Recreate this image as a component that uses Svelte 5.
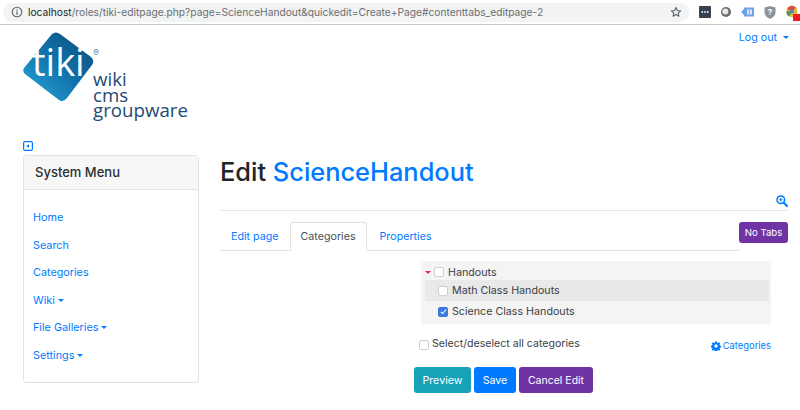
<script>
  const menu = [
    { label: "Home" },
    { label: "Search" },
    { label: "Categories" },
    { label: "Wiki", caret: true },
    { label: "File Galleries", caret: true },
    { label: "Settings", caret: true },
  ];
  const tabs = ["Edit page", "Categories", "Properties"];
  let activeTab = $state("Categories");
</script>

<div class="page">
  <div class="chrome">
    <div class="omnibox">
      <svg class="info" width="12" height="12" viewBox="0 0 12 12">
        <circle cx="6" cy="6" r="4.8" fill="none" stroke="#5f6368" stroke-width="1.1" />
        <rect x="5.4" y="5.2" width="1.2" height="3.6" fill="#5f6368" />
        <rect x="5.4" y="3.2" width="1.2" height="1.2" fill="#5f6368" />
      </svg>
      <span class="url"><b>localhost</b>/roles/tiki-editpage.php?page=ScienceHandout&amp;quickedit=Create+Page#contenttabs_editpage-2</span>
      <svg class="star" width="12" height="12" viewBox="0 0 24 24">
        <path d="M12 3l2.7 6 6.5.7-4.9 4.3 1.4 6.4L12 17l-5.7 3.4 1.4-6.4-4.9-4.3 6.5-.7z" fill="none" stroke="#5f6368" stroke-width="2.2" stroke-linejoin="round" />
      </svg>
    </div>
    <div class="extensions">
      <svg width="12" height="12" viewBox="0 0 12 12">
        <rect width="12" height="12" rx="1" fill="#36424f" />
        <rect x="2.5" y="5.2" width="1.6" height="1.6" fill="#fff" />
        <rect x="5.2" y="5.2" width="1.6" height="1.6" fill="#fff" />
        <rect x="7.9" y="5.2" width="1.6" height="1.6" fill="#fff" />
      </svg>
      <svg width="12" height="12" viewBox="0 0 12 12">
        <circle cx="6" cy="6" r="5" fill="#6b6b6b" />
        <circle cx="5.4" cy="5.4" r="3" fill="#e6e6e6" />
      </svg>
      <svg width="14" height="12" viewBox="0 0 14 12">
        <path d="M0 6l3-3V1.500h10v9H3V9z" fill="#6f9fe8" />
        <rect x="6" y="3.500" width="5" height="5" fill="#dce8fa" />
        <rect x="8.200" y="3.500" width=".8" height="5" fill="#6f9fe8" />
      </svg>
      <svg width="12" height="13" viewBox="0 0 12 13">
        <path d="M6 0l5.500 1.500v5c0 3-2.500 5-5.500 6.500C3 11.500.5 9.500.5 6.500v-5z" fill="#8d949c" />
        <text x="6" y="9" class="shield">?</text>
      </svg>
      <svg class="last" width="14" height="16" viewBox="0 0 14 16">
        <circle cx="6" cy="6.500" r="5.500" fill="#e8b93a" />
        <path d="M6 6.500L1 4a5.500 5.500 0 0 1 9-1.500z" fill="#d9503f" />
        <path d="M6 6.500L3 11.500A5.500 5.500 0 0 1 .6 6z" fill="#4c9a52" />
        <circle cx="6" cy="6.500" r="2" fill="#4a7fd0" />
        <rect x="7" y="9" width="7" height="7" fill="#ee1c25" />
      </svg>
    </div>
  </div>

  <header class="top">
    <svg class="logo" width="170" height="95" viewBox="0 0 170 95">
      <defs>
        <linearGradient id="tikiBlue" x1="0" y1="1" x2="1" y2="0">
          <stop offset="0" stop-color="#28a9e0" />
          <stop offset="0.55" stop-color="#0f6ea6" />
          <stop offset="1" stop-color="#114a78" />
        </linearGradient>
      </defs>
      <path d="M30 4 Q34 1 38 4 L69 27 Q73 31 70 35 L45 68 Q41 73 37 70 L3 44 Q0 41 2 38 Z" fill="url(#tikiBlue)" />
      <text x="10" y="46" class="tiki">tiki</text>
      <text x="71" y="26" class="reg">®</text>
      <text x="71" y="56" class="word">wiki</text>
      <text x="71" y="71.500" class="word">cms</text>
      <text x="71" y="87" class="word">groupware</text>
    </svg>
    <a class="logout" href="#top">Log out<span class="caret wide"></span></a>
  </header>

  <div class="toggle-row">
    <svg width="10" height="10" viewBox="0 0 10 10">
      <rect x=".6" y=".6" width="8.800" height="8.800" rx="1.300" fill="none" stroke="#007bff" stroke-width="1.200" />
      <path d="M6 3v4L3.400 5z" fill="#007bff" />
    </svg>
  </div>

  <div class="layout">
    <aside class="sidebar">
      <div class="card-head">System Menu</div>
      <nav class="card-body">
        {#each menu as item}
          <a href="#top">{item.label}{#if item.caret}<span class="caret"></span>{/if}</a>
        {/each}
      </nav>
    </aside>

    <main class="content">
      <h1>Edit <a href="#top">ScienceHandout</a></h1>
      <div class="tools">
        <svg width="12" height="12" viewBox="0 0 12 12">
          <circle cx="4.800" cy="4.800" r="3.800" fill="none" stroke="#007bff" stroke-width="1.500" />
          <path d="M7.800 7.800L11 11" stroke="#007bff" stroke-width="2" stroke-linecap="round" />
          <path d="M3 4.800h3.600M4.800 3v3.600" stroke="#007bff" stroke-width="1" />
        </svg>
      </div>

      <div class="tabbar">
        <div class="tabs">
          {#each tabs as tab}
            <button type="button" class="tab" class:active={activeTab === tab} onclick={() => (activeTab = tab)}>{tab}</button>
          {/each}
        </div>
        <button type="button" class="btn purple notabs">No Tabs</button>
      </div>

      <div class="panel">
        <div class="tree-wrap">
          <div class="tree">
            <div class="row parent">
              <span class="pink"></span>
              <input type="checkbox" />
              <span>Handouts</span>
            </div>
            <div class="row child hover">
              <input type="checkbox" />
              <span>Math Class Handouts</span>
            </div>
            <div class="row child">
              <input type="checkbox" checked />
              <span>Science Class Handouts</span>
            </div>
          </div>
          <div class="select-row">
            <label><input type="checkbox" /><span>Select/deselect all categories</span></label>
            <a class="cat-link" href="#top">
              <svg width="10" height="10" viewBox="0 0 24 24">
                <path fill="#007bff" fill-rule="evenodd" d="M10 1h4l.6 3 2.200.9 2.600-1.700 2.800 2.800-1.700 2.600.9 2.200 3 .6v4l-3 .6-.9 2.200 1.700 2.600-2.800 2.800-2.600-1.700-2.200.9-.6 3h-4l-.6-3-2.200-.9-2.600 1.700-2.800-2.800 1.700-2.600-.9-2.200-3-.6v-4l3-.6.9-2.200-1.700-2.600 2.800-2.800 2.600 1.700 2.200-.9zM12 8a4 4 0 1 0 0 8 4 4 0 0 0 0-8z" />
              </svg>
              Categories
            </a>
          </div>
        </div>
        <div class="actions">
          <button type="button" class="btn teal">Preview</button>
          <button type="button" class="btn blue">Save</button>
          <button type="button" class="btn purple">Cancel Edit</button>
        </div>
      </div>
    </main>
  </div>
</div>

<style>
  :global(body) {
    margin: 0;
    background: #fff;
    overflow: hidden;
  }

  .page {
    width: 800px;
    height: 410px;
    overflow: hidden;
    font-family: Inter, "Liberation Sans", sans-serif;
    font-size: 10.700px;
    color: #212529;
  }

  a {
    color: #007bff;
    text-decoration: none;
  }

  .chrome {
    display: flex;
    align-items: center;
    height: 24px;
    border-bottom: 1px solid #c8c8c8;
  }

  .omnibox {
    display: flex;
    align-items: center;
    width: 686px;
    height: 19px;
    margin-left: 3px;
    padding: 0 7px 0 8px;
    box-sizing: border-box;
    border-radius: 10px;
    background: #f1f3f4;
  }

  .info {
    flex: none;
    margin-right: 5px;
  }

  .url {
    flex: 1;
    color: #6a6e72;
    font-size: 10.220px;
    white-space: nowrap;
  }

  .url b {
    color: #202124;
    font-weight: 400;
  }

  .extensions {
    display: flex;
    align-items: center;
    gap: 9px;
    margin-left: 10px;
  }

  .last {
    margin: 1px 0 -1px 1px;
  }

  .shield {
    fill: #fff;
    font-size: 8px;
    font-weight: 700;
    text-anchor: middle;
  }

  .top {
    display: flex;
    justify-content: space-between;
    height: 115px;
    padding-left: 22px;
    padding-right: 11px;
  }

  .logo {
    margin-top: 5px;
  }

  .tiki {
    fill: #fff;
    font-family: "Open Sans", sans-serif;
    font-size: 38px;
  }

  .reg {
    fill: #6f8ba5;
    font-size: 9px;
  }

  .word {
    fill: #1f4a74;
    font-family: "Open Sans", sans-serif;
    font-size: 18.700px;
  }

  .logout {
    margin-top: 6px;
    font-size: 10.700px;
  }

  .caret {
    display: inline-block;
    margin-left: 3px;
    vertical-align: 2px;
    border-top: 3px solid currentColor;
    border-left: 3px solid transparent;
    border-right: 3px solid transparent;
  }

  .caret.wide {
    margin-left: 6px;
  }

  .toggle-row {
    display: flex;
    height: 15px;
    padding: 1px 0 0 23px;
    box-sizing: border-box;
  }

  .layout {
    display: flex;
    gap: 21px;
    padding-left: 23px;
    padding-right: 12px;
  }

  .sidebar {
    flex: none;
    width: 176px;
    height: 228px;
    box-sizing: border-box;
    border: 1px solid #e2e2e2;
    border-radius: 3px;
  }

  .card-head {
    height: 34px;
    padding-left: 11px;
    line-height: 33px;
    box-sizing: border-box;
    border-bottom: 1px solid #e6e6e6;
    background: #f7f7f7;
    color: #2b2f33;
    font-size: 13px;
    font-weight: 500;
  }

  .card-body {
    display: flex;
    flex-direction: column;
    gap: 12px;
    padding: 20px 9px 0;
  }

  .card-body a {
    height: 15.500px;
    line-height: 15.500px;
    font-size: 10.800px;
  }

  .content {
    flex: 1;
    min-width: 0;
  }

  h1 {
    height: 44px;
    margin: 0;
    font-size: 25.400px;
    font-weight: 500;
    line-height: 34px;
    white-space: nowrap;
  }

  .tools {
    display: flex;
    justify-content: flex-end;
    height: 6px;
    margin-top: -4px;
    padding-bottom: 9px;
    border-bottom: 1px solid #e6e6e6;
  }

  .tabbar {
    display: flex;
    align-items: flex-start;
    justify-content: space-between;
    margin-top: 11px;
  }

  .tabs {
    display: flex;
    flex: none;
    width: 519px;
    height: 29px;
    box-sizing: border-box;
    border-bottom: 1px solid #e2e2e2;
  }

  .tab {
    height: 29px;
    padding: 0 10px;
    border: 1px solid transparent;
    border-radius: 3px 3px 0 0;
    background: none;
    color: #007bff;
    font: inherit;
  }

  .tab:last-child {
    margin-left: 2px;
  }

  .tab.active {
    border-color: #e2e2e2 #e2e2e2 #fff;
    color: #495057;
  }

  .btn {
    padding: 0;
    border: none;
    border-radius: 3px;
    color: #fff;
    font: inherit;
  }

  .notabs {
    width: 49px;
    height: 21px;
    font-size: 9.600px;
  }

  .purple {
    background: #6f33a5;
  }

  .teal {
    width: 57px;
    background: #17a2b8;
  }

  .blue {
    width: 42px;
    background: #007bff;
  }

  .actions .purple {
    width: 74px;
    font-size: 10.500px;
  }

  .panel {
    display: flex;
    flex-direction: column;
    padding-top: 10px;
  }

  .tree-wrap {
    margin-left: 198px;
  }

  .tree {
    width: 350px;
    height: 63px;
    margin-left: 3px;
    box-sizing: border-box;
    padding: 0 2px 0 4px;
    background: #f4f4f4;
  }

  .row {
    display: flex;
    align-items: center;
    gap: 4px;
    color: #3a3f44;
  }

  .parent {
    height: 19px;
    padding-top: 3px;
    box-sizing: border-box;
  }

  .child {
    height: 21px;
    padding-left: 13px;
  }

  .hover {
    background: #e9e9e9;
  }

  .pink {
    width: 0;
    height: 0;
    margin-right: -1px;
    border-top: 3px solid #ec1f8e;
    border-left: 3px solid transparent;
    border-right: 3px solid transparent;
  }

  input[type="checkbox"] {
    appearance: none;
    position: relative;
    flex: none;
    width: 10px;
    height: 10px;
    margin: 0;
    box-sizing: border-box;
    border: 1px solid #cfcfcf;
    border-radius: 2px;
    background: #fff;
  }

  input[type="checkbox"]:checked {
    border-color: #3b78e0;
    background: #3b78e0;
  }

  input[type="checkbox"]:checked::after {
    content: "";
    position: absolute;
    left: 2.500px;
    top: .5px;
    width: 2px;
    height: 5px;
    border: solid #fff;
    border-width: 0 1.200px 1.200px 0;
    transform: rotate(40deg);
  }

  .select-row {
    display: flex;
    align-items: center;
    justify-content: space-between;
    height: 19px;
    margin-top: 10px;
    padding-right: 17px;
  }

  .select-row label {
    display: flex;
    align-items: center;
    gap: 3px;
    margin-left: 1px;
    color: #3a3f44;
    font-size: 10.600px;
  }

  .select-row label input {
    margin-top: 2px;
  }

  .cat-link {
    display: flex;
    align-items: center;
    gap: 2px;
    margin-top: 4px;
    font-size: 9.400px;
  }

  .actions {
    display: flex;
    gap: 3px;
    height: 26px;
    margin: 14px 0 0 194px;
  }
</style>
